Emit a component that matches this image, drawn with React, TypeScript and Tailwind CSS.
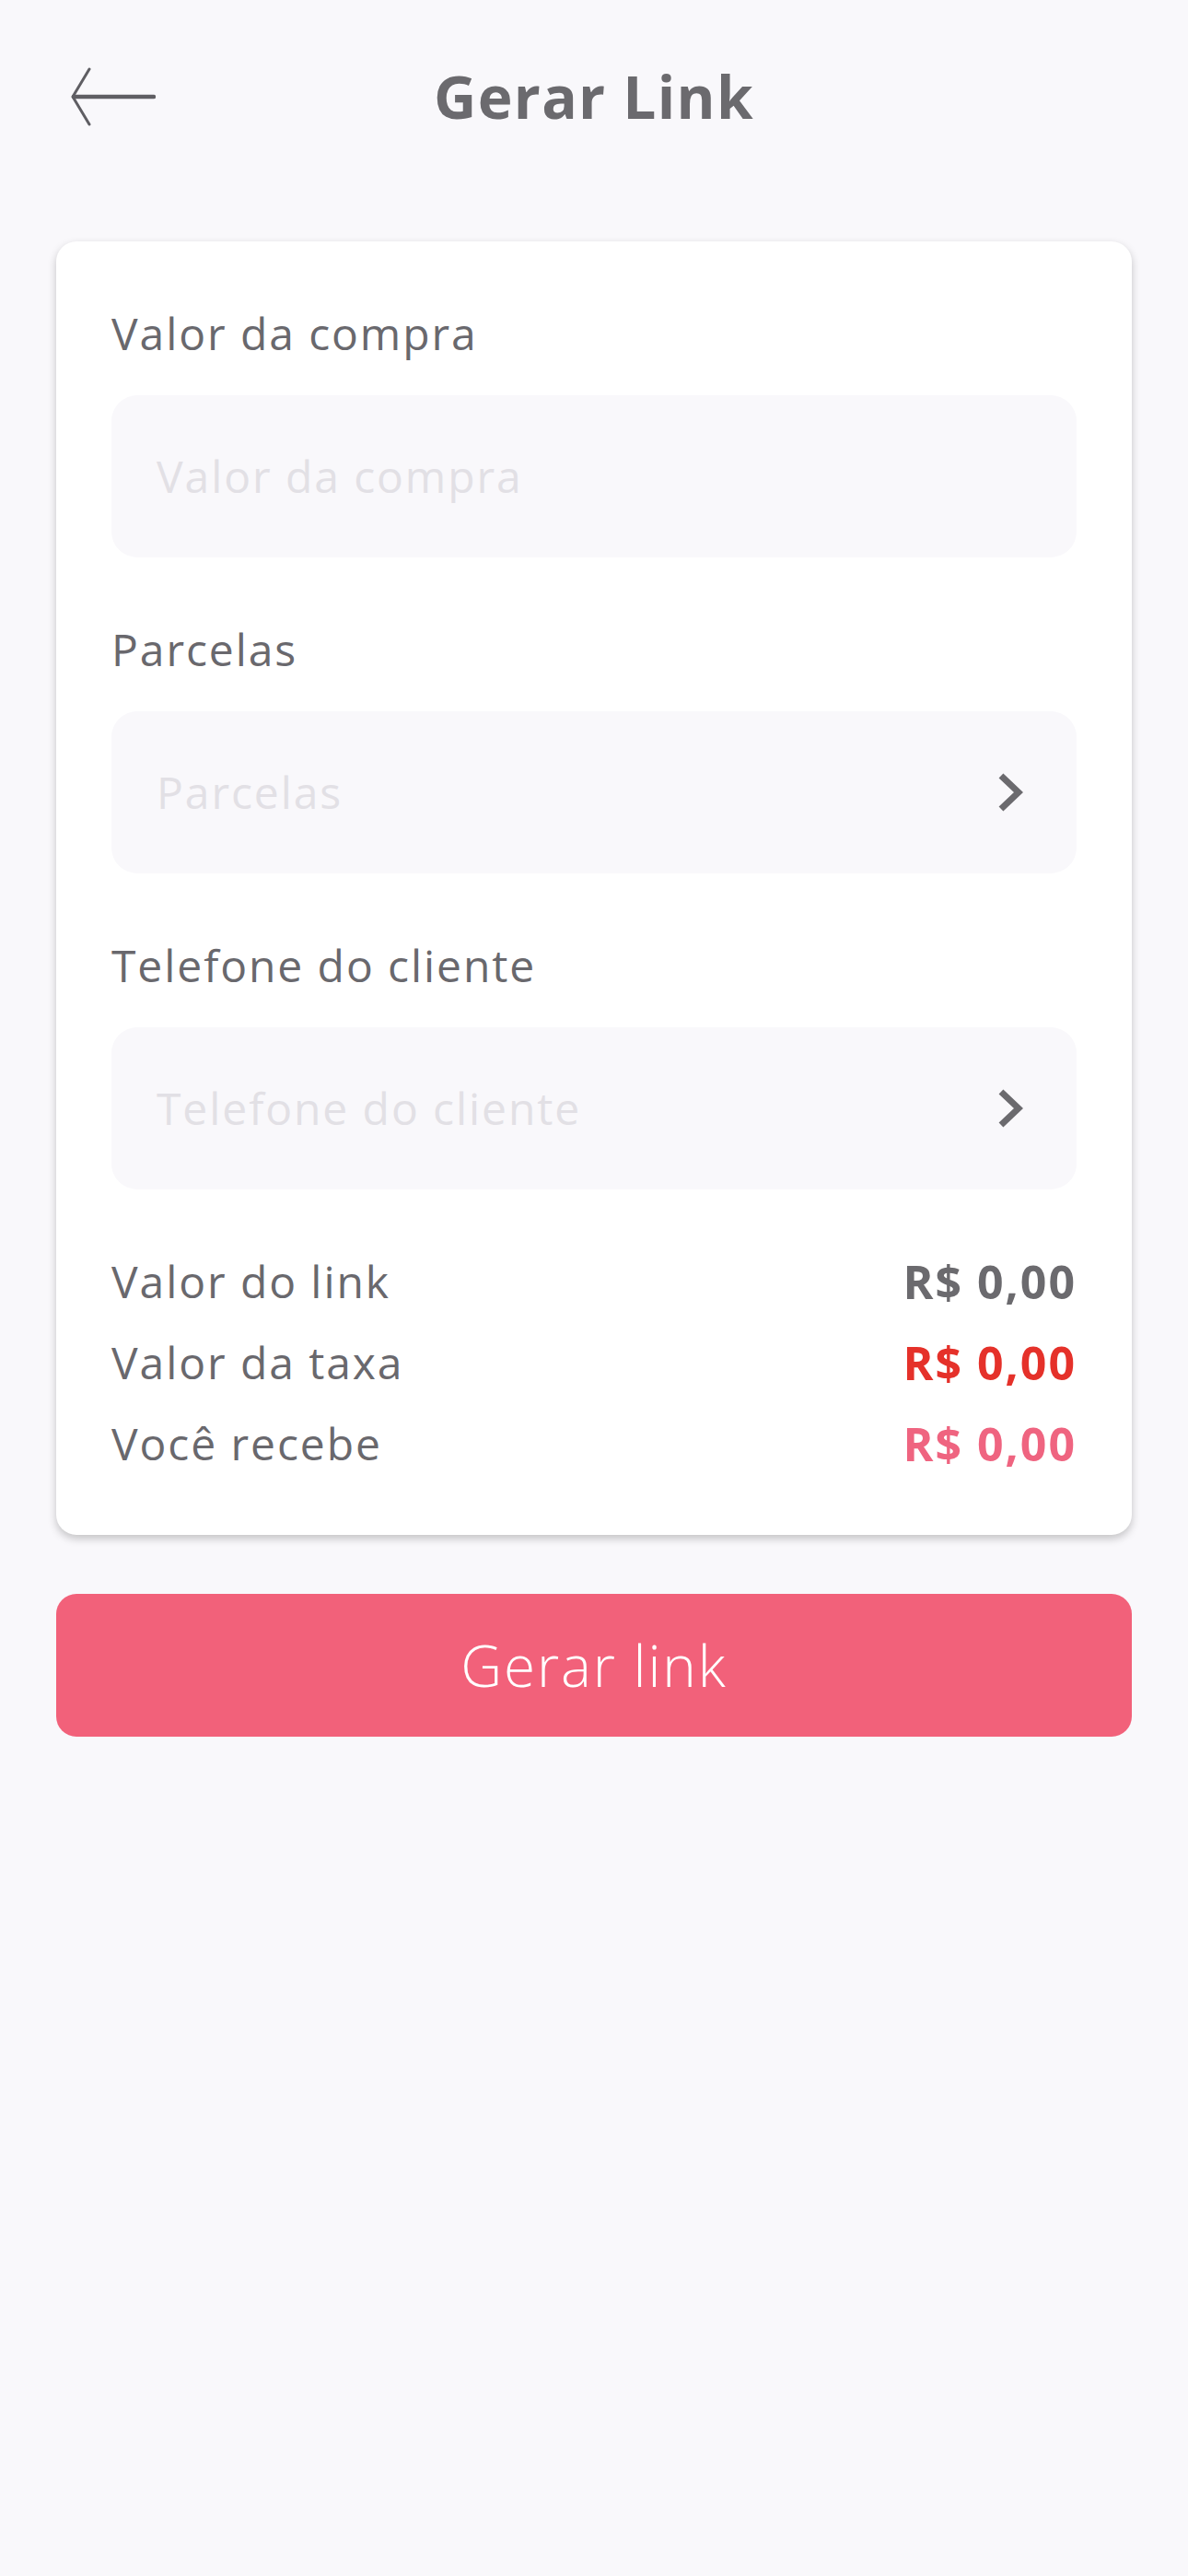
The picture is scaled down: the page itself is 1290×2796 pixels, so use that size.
import React from 'react';

const font = { fontFamily: '"Open Sans", "DejaVu Sans", sans-serif' };

const BackArrow: React.FC = () => (
  <svg width="92" height="64" viewBox="0 0 92 64" fill="none">
    <path d="M20 2 L2 32 L20 62" stroke="#5f5e63" strokeWidth="3" strokeLinecap="round" strokeLinejoin="round" />
    <path d="M3 32 H90" stroke="#5f5e63" strokeWidth="4.5" strokeLinecap="round" />
  </svg>
);

const Chevron: React.FC = () => (
  <svg width="28" height="44" viewBox="0 0 28 44" fill="none">
    <path d="M4 4 L23 22 L4 40" stroke="#6b6a6e" strokeWidth="7" strokeLinejoin="miter" />
  </svg>
);

const Field: React.FC<{ label: string; placeholder: string; select?: boolean; first?: boolean }> = ({
  label,
  placeholder,
  select,
  first,
}) => (
  <div className={first ? 'pt-[72px]' : 'pt-[72px]'}>
    <div className="text-[48px] leading-[56px] tracking-[0.04em] text-[#69686d]">{label}</div>
    <div className="mt-[39px] h-[176px] rounded-[28px] bg-[#f9f8fb] flex items-center justify-between pl-[49px] pr-[58px]">
      <span className="text-[48px] tracking-[0.04em] text-[#e2e0e5]">{placeholder}</span>
      {select && <Chevron />}
    </div>
  </div>
);

const Row: React.FC<{ label: string; value: string; color: string }> = ({ label, value, color }) => (
  <div className="flex items-center justify-between h-[88px]">
    <span className="text-[48px] tracking-[0.04em] text-[#69686d]">{label}</span>
    <span className={`text-[50px] font-bold tracking-[0.04em] ${color}`}>{value}</span>
  </div>
);

export default function App() {
  return (
    <div className="min-h-screen bg-[#f9f8fb]" style={font}>
      <header className="h-[210px] grid grid-cols-[1fr_auto_1fr] items-center px-[77px]">
        <button className="justify-self-start">
          <BackArrow />
        </button>
        <h1 className="text-[64px] font-bold tracking-[0.02em] text-[#6b6a6e]">Gerar Link</h1>
        <div />
      </header>

      <div className="mt-[52px] mx-[61px] rounded-[22px] bg-white shadow-[0_4px_10px_rgba(0,0,0,0.22)] px-[60px] pb-[55px]">
        <Field first label="Valor da compra" placeholder="Valor da compra" />
        <Field label="Parcelas" placeholder="Parcelas" select />
        <Field label="Telefone do cliente" placeholder="Telefone do cliente" select />
        <div className="mt-[56px]">
          <Row label="Valor do link" value="R$ 0,00" color="text-[#6b6a6e]" />
          <Row label="Valor da taxa" value="R$ 0,00" color="text-[#e5312a]" />
          <Row label="Você recebe" value="R$ 0,00" color="text-[#ef6480]" />
        </div>
      </div>

      <div className="mx-[61px] mt-[64px]">
        <button className="w-full h-[155px] rounded-[22px] bg-[#f2617a] text-white text-[62px] font-light tracking-[0.03em]">
          Gerar link
        </button>
      </div>
    </div>
  );
}
